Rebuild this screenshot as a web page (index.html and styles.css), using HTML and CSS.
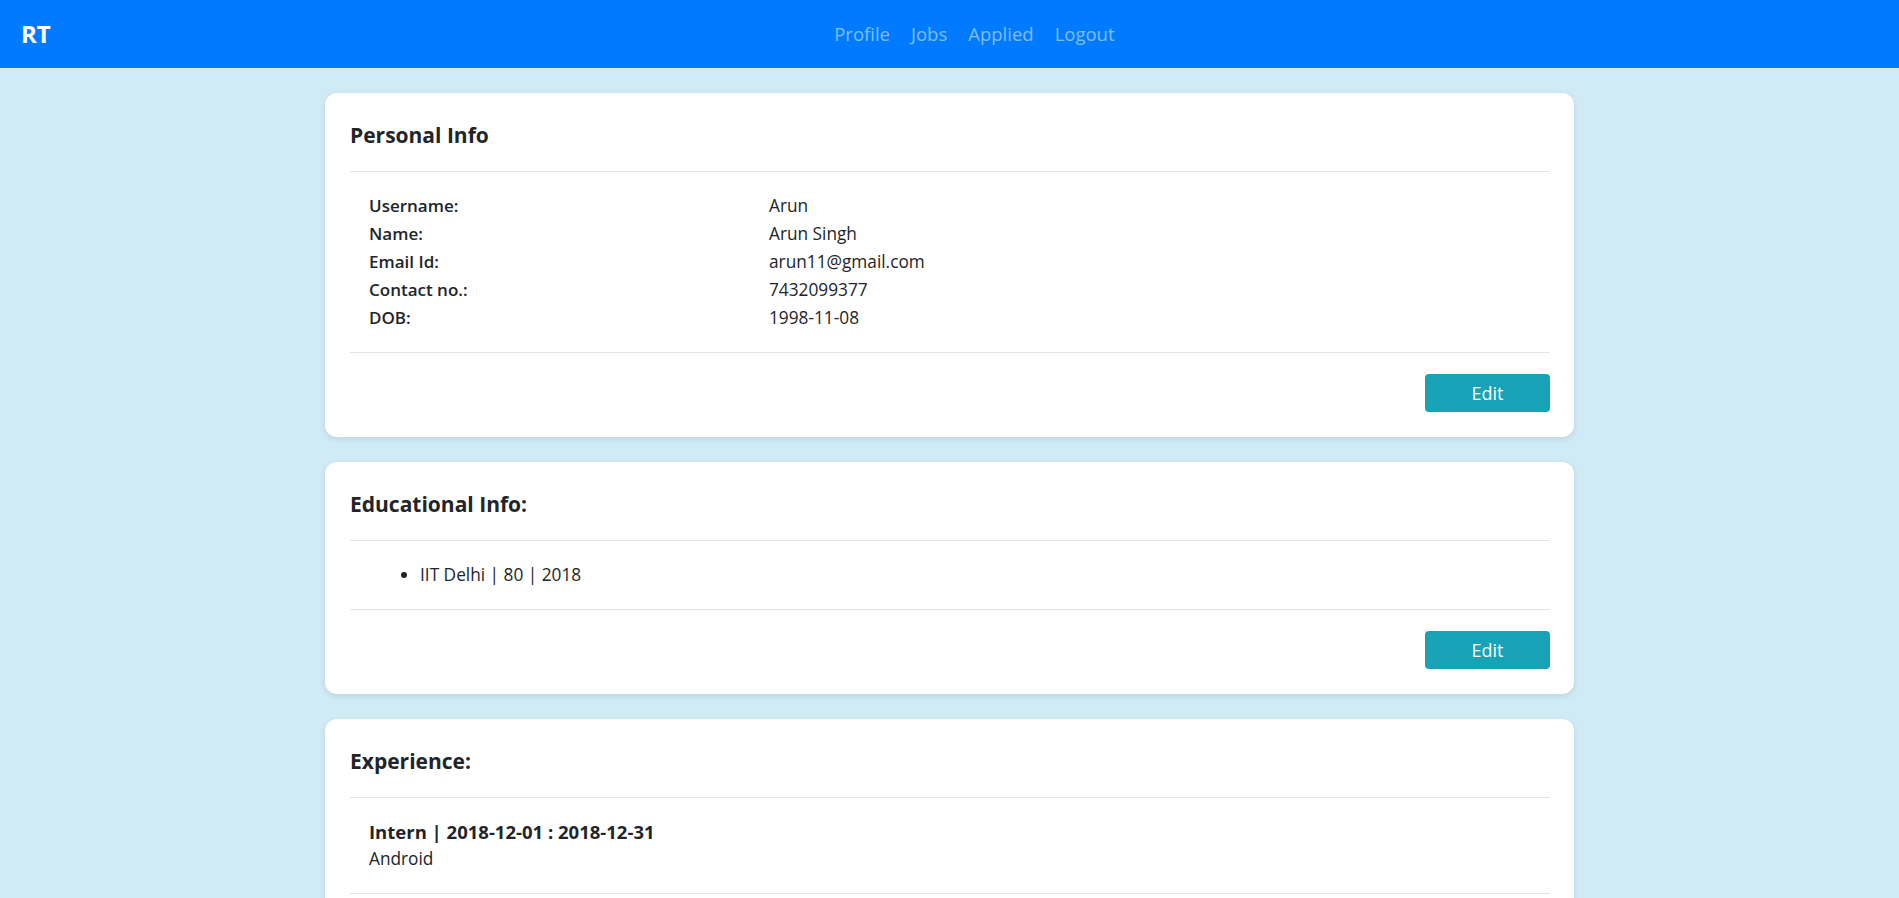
FILE: index.html
```html
<!DOCTYPE html>
<html lang="en">
<head>
<meta charset="utf-8">
<title>RT - Profile</title>
<link rel="stylesheet" href="styles.css">
</head>
<body>
<nav class="navbar">
  <a class="brand" href="#">RT</a>
  <ul class="nav-links">
    <li><a href="#">Profile</a></li>
    <li><a href="#">Jobs</a></li>
    <li><a href="#">Applied</a></li>
    <li><a href="#">Logout</a></li>
  </ul>
</nav>
<main class="container">
  <section class="card">
    <h5 class="card-title">Personal Info</h5>
    <div class="card-body">
      <div class="info-grid">
        <span class="label">Username:</span><span>Arun</span>
        <span class="label">Name:</span><span>Arun Singh</span>
        <span class="label">Email Id:</span><span>arun11@gmail.com</span>
        <span class="label">Contact no.:</span><span>7432099377</span>
        <span class="label">DOB:</span><span>1998-11-08</span>
      </div>
    </div>
    <div class="card-footer"><button class="btn">Edit</button></div>
  </section>
  <section class="card">
    <h5 class="card-title">Educational Info:</h5>
    <div class="card-body">
      <ul class="edu-list">
        <li>IIT Delhi | 80 | 2018</li>
      </ul>
    </div>
    <div class="card-footer"><button class="btn">Edit</button></div>
  </section>
  <section class="card">
    <h5 class="card-title">Experience:</h5>
    <div class="card-body">
      <div class="exp-item">
        <h6 class="exp-title">Intern | 2018-12-01 : 2018-12-31</h6>
        <p class="exp-desc">Android</p>
      </div>
    </div>
    <div class="card-footer"><button class="btn">Edit</button></div>
  </section>
</main>
</body>
</html>
```
FILE: styles.css
```css
html { overflow: hidden; }
body {
  margin: 0;
  background: #d0ebf6;
  font-family: "Open Sans", "Noto Sans", sans-serif;
  font-size: 17.25px;
  color: #212529;
}
.navbar {
  height: 68px;
  background: #007bff;
  display: flex;
  align-items: center;
  padding: 0 21px;
}
.brand {
  color: #fff;
  font-weight: 700;
  font-size: 24px;
  line-height: 30px;
  margin-right: 20px;
  text-decoration: none;
}
.nav-links {
  list-style: none;
  margin: 0 auto;
  padding: 0;
  display: flex;
}
.nav-links a {
  display: block;
  padding: 0 10.5px;
  color: rgba(255, 255, 255, 0.5);
  font-size: 18.5px;
  line-height: 28px;
  text-decoration: none;
}
.container {
  width: 1249px;
  margin: 25px auto 0;
  display: flex;
  flex-direction: column;
  gap: 25px;
}
.card {
  background: #fff;
  border-radius: 12px;
  box-shadow: 0 2px 6px rgba(0, 0, 0, 0.1);
  padding: 0 24px 0 25px;
}
.card-title {
  margin: 0;
  padding: 27px 0 21px;
  font-size: 21px;
  line-height: 30px;
  font-weight: 700;
  border-bottom: 1px solid #e4e4e4;
}
.card-body {
  padding: 20px 0 20px;
  border-bottom: 1px solid #e4e4e4;
}
.info-grid {
  display: grid;
  grid-template-columns: 400px 1fr;
  padding-left: 19px;
  line-height: 28px;
}
.label {
  font-weight: 600;
  font-size: 17px;
}
.edu-list {
  margin: 0;
  padding-left: 70px;
  line-height: 28px;
}
.exp-item { padding-left: 19px; }
.exp-title {
  margin: 0;
  font-size: 18.5px;
  line-height: 27px;
  font-weight: 700;
}
.exp-desc {
  margin: 0;
  line-height: 28px;
}
.card-footer {
  display: flex;
  justify-content: flex-end;
  padding: 21px 0 25px;
}
.btn {
  width: 125px;
  height: 38px;
  border: none;
  border-radius: 4px;
  background: #17a2b8;
  color: #fff;
  font-family: inherit;
  font-size: 18px;
}
```
